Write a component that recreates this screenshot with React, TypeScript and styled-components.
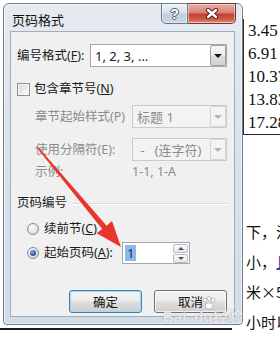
import React from 'react';
import styled, { createGlobalStyle } from 'styled-components';

const GlobalStyle = createGlobalStyle`
    html, body {
        margin: 0;
        padding: 0;
        background: #fff;
    }
    body {
        width: 280px;
        height: 348px;
        overflow: hidden;
    }
    * {
        box-sizing: border-box;
    }
`;

const Page = styled.div`
    position: relative;
    width: 280px;
    height: 348px;
    overflow: hidden;
    background: #fff;
`;

/* ---------- document behind the dialog ---------- */

const Document = styled.div`
    display: grid;
    grid-template-columns: 243px 1fr;
    height: 100%;
    color: #111;
`;

const LeftPane = styled.div`
    display: flex;
    flex-direction: column;
    justify-content: flex-end;
    padding-bottom: 18px;
`;

const Rule = styled.div`
    width: 232px;
    height: 2px;
    background: #1c1c1c;
`;

const RightPane = styled.div`
    display: flex;
    flex-direction: column;
    padding-top: 19px;
    white-space: nowrap;
    overflow: hidden;
`;

const Table = styled.div`
    border-left: 1px solid #2a2a2a;
    border-bottom: 1px solid #2a2a2a;
`;

const Cell = styled.div`
    height: 23px;
    line-height: 23px;
    padding-left: 4px;
    font-family: 'Liberation Serif', 'DejaVu Serif', serif;
    font-size: 17px;
`;

const Lines = styled.div`
    margin-top: 82px;
`;

const Line = styled.div`
    height: 30px;
    line-height: 30px;
    padding-left: 3px;
    font-family: 'Noto Sans CJK SC', sans-serif;
    font-size: 15px;
`;

const Marked = styled.span`
    color: #1d2a8a;
    text-decoration: underline;
    text-decoration-color: #3b5bd6;
`;

/* ---------- dialog window ---------- */

const Window = styled.div`
    position: absolute;
    left: 3px;
    top: 3px;
    width: 240px;
    height: 322px;
    display: flex;
    flex-direction: column;
    padding: 0 7px 7px 6px;
    border: 1px solid #6d7d90;
    border-radius: 6px 6px 4px 4px;
    background: linear-gradient(180deg, #e6ebf1 0%, #dbe3ec 35%, #d2dce7 100%);
    box-shadow: inset 0 0 0 1px rgba(255, 255, 255, 0.6);
    font-family: 'Noto Sans', 'Noto Sans CJK SC', sans-serif;
`;

const TitleBar = styled.div`
    height: 27px;
    display: flex;
    align-items: flex-start;
    justify-content: space-between;
    margin-right: -1px;
`;

const Title = styled.div`
    margin: 7px 0 0 2px;
    font-size: 13px;
    line-height: 18px;
    color: #111;
`;

const Caption = styled.div`
    display: flex;
    margin-top: -1px;
`;

const CaptionButton = styled.div<{ $close?: boolean }>`
    width: ${(p) => (p.$close ? 48 : 27)}px;
    height: 21px;
    display: flex;
    align-items: center;
    justify-content: center;
    border: 1px solid ${(p) => (p.$close ? '#6b3a38' : '#6a7a90')};
    border-left-width: ${(p) => (p.$close ? 0 : 1)}px;
    border-radius: ${(p) => (p.$close ? '0 0 5px 0' : '0 0 0 5px')};
    background: ${(p) =>
        p.$close
            ? 'linear-gradient(180deg, #eab0a7 0%, #dc7f72 45%, #c6402f 55%, #d5604f 85%, #e79a8c 100%)'
            : 'linear-gradient(180deg, #eef2f6 0%, #d8e0ea 45%, #c2cedc 55%, #cbd6e3 100%)'};
    box-shadow: inset 0 0 0 1px rgba(255, 255, 255, 0.45);
`;

const HelpGlyph = styled.span`
    font-family: 'Liberation Sans', sans-serif;
    font-weight: 700;
    font-size: 14px;
    line-height: 14px;
    color: #fff;
    text-shadow: -1px 0 #4c5a6c, 1px 0 #4c5a6c, 0 -1px #4c5a6c, 0 1px #4c5a6c;
`;

const Panel = styled.div`
    flex: 1;
    display: flex;
    flex-direction: column;
    padding: 12px 7px 0 6px;
    border: 1px solid #9fadbd;
    background: #f0f0f0;
    font-size: 12.5px;
    color: #1a1a1a;
`;

const Row = styled.div<{ $top: number; $height: number; $indent?: number }>`
    display: flex;
    align-items: center;
    flex-shrink: 0;
    margin-top: ${(p) => p.$top}px;
    height: ${(p) => p.$height}px;
    padding-left: ${(p) => p.$indent || 0}px;
`;

const Label = styled.span<{ $width?: number; $disabled?: boolean }>`
    width: ${(p) => (p.$width ? `${p.$width}px` : 'auto')};
    flex-shrink: 0;
    line-height: 16px;
    white-space: nowrap;
    color: ${(p) => (p.$disabled ? '#8c8c8c' : '#1a1a1a')};
`;

const Key = styled.span`
    text-decoration: underline;
    text-underline-offset: 1px;
`;

const Combo = styled.div<{ $width: number; $disabled?: boolean }>`
    width: ${(p) => p.$width}px;
    height: 23px;
    display: flex;
    align-items: center;
    padding: 0 0 0 4px;
    border: 1px solid ${(p) => (p.$disabled ? '#c8cacd' : '#a4a7ad')};
    background: ${(p) => (p.$disabled ? '#f3f3f3' : '#fff')};
    color: ${(p) => (p.$disabled ? '#8c8c8c' : '#1a1a1a')};
    font-size: 13px;
    white-space: nowrap;
`;

const ComboText = styled.span`
    flex: 1;
    overflow: hidden;
    line-height: 16px;
`;

const ComboArrow = styled.span<{ $disabled?: boolean }>`
    width: 16px;
    height: 21px;
    display: flex;
    align-items: center;
    justify-content: center;
    border: 1px solid ${(p) => (p.$disabled ? '#d3d5d8' : '#9a9ea6')};
    border-radius: 2px;
    background: ${(p) =>
        p.$disabled ? '#f4f4f4' : 'linear-gradient(180deg, #f7f7f7 0%, #ececec 50%, #dcdcdc 51%, #d2d2d2 100%)'};

    &::after {
        content: '';
        border-left: 4px solid transparent;
        border-right: 4px solid transparent;
        border-top: 4px solid ${(p) => (p.$disabled ? '#b4b4b4' : '#111')};
    }
`;

const CheckBox = styled.span`
    width: 13px;
    height: 13px;
    margin-right: 4px;
    flex-shrink: 0;
    border: 1px solid #8e8f8f;
    background: linear-gradient(135deg, #d6d6d6 0%, #f2f2f2 70%, #fbfbfb 100%);
    box-shadow: inset 0 0 0 1px #f6f6f6;
`;

const Radio = styled.span<{ $checked?: boolean }>`
    position: relative;
    width: 12px;
    height: 12px;
    margin-right: 5px;
    flex-shrink: 0;
    border: 1px solid #8a8c8e;
    border-radius: 50%;
    background: radial-gradient(circle at 40% 35%, #fefefe 0%, #e4e4e4 55%, #c8c8c8 100%);

    &::after {
        content: '';
        display: ${(p) => (p.$checked ? 'block' : 'none')};
        position: absolute;
        left: 2px;
        top: 2px;
        width: 6px;
        height: 6px;
        border-radius: 50%;
        background: radial-gradient(circle at 40% 35%, #8bb8e6 0%, #2d5f9c 55%, #163a66 100%);
    }
`;

const GroupLine = styled.span`
    flex: 1;
    height: 1px;
    margin-left: 6px;
    background: #d5dfe5;
    box-shadow: 0 1px 0 #fff;
`;

const SpinBox = styled.div`
    width: 68px;
    height: 22px;
    display: flex;
    align-items: center;
    padding: 0 1px 0 2px;
    border: 1px solid #a4a7ad;
    background: #fff;
`;

const Selected = styled.span`
    padding: 0 2px;
    line-height: 16px;
    font-size: 13px;
    background: #8cb6e8;
    color: #10305c;
`;

const SpinButtons = styled.div`
    display: flex;
    flex-direction: column;
    gap: 1px;
    margin-left: auto;
`;

const SpinButton = styled.span<{ $up?: boolean }>`
    width: 15px;
    height: 9px;
    display: flex;
    align-items: center;
    justify-content: center;
    border: 1px solid #b7bcc3;
    border-radius: 2px;
    background: linear-gradient(180deg, #fafafa 0%, #e6e8eb 100%);

    &::after {
        content: '';
        border-left: 3px solid transparent;
        border-right: 3px solid transparent;
        ${(p) => (p.$up ? 'border-bottom: 3px solid #4a5668;' : 'border-top: 3px solid #4a5668;')}
    }
`;

const ButtonRow = styled.div`
    display: flex;
    justify-content: flex-end;
    gap: 12px;
    margin-top: 26px;
`;

const PushButton = styled.div<{ $default?: boolean }>`
    width: 73px;
    height: 23px;
    display: flex;
    align-items: center;
    justify-content: center;
    border: 1px solid ${(p) => (p.$default ? '#3c7fb1' : '#707070')};
    border-radius: 3px;
    background: linear-gradient(180deg, #f4f4f4 0%, #ebebeb 48%, #dddddd 52%, #cfcfcf 100%);
    box-shadow: inset 0 0 0 1px ${(p) => (p.$default ? '#a6d8f3' : 'rgba(255, 255, 255, 0.75)')};
    font-size: 12.5px;
    color: #111;
`;

/* ---------- overlays ---------- */

const Overlay = styled.svg`
    position: absolute;
    left: 0;
    top: 0;
    pointer-events: none;
`;

const Watermark = styled.div`
    position: absolute;
    left: 163px;
    top: 309px;
    display: flex;
    align-items: baseline;
    font-family: 'Liberation Sans', 'Noto Sans CJK SC', sans-serif;
    font-weight: 700;
    font-size: 15px;
    line-height: 15px;
    color: rgba(255, 255, 255, 0.8);
    text-shadow: 0 0 1px rgba(90, 90, 90, 0.55);
    pointer-events: none;
`;

const Paw = styled.svg`
    position: absolute;
    left: 38px;
    top: -13px;
`;

const WatermarkGap = styled.span`
    width: 8px;
`;

const App = () => {
    return (
        <Page>
            <GlobalStyle />
            <Document>
                <LeftPane>
                    <Rule />
                </LeftPane>
                <RightPane>
                    <Table>
                        {['3.45', '6.91', '10.37', '13.83', '17.28'].map((v) => (
                            <Cell key={v}>{v}</Cell>
                        ))}
                    </Table>
                    <Lines>
                        <Line>下，注</Line>
                        <Line>
                            小，<Marked>且</Marked>
                        </Line>
                        <Line>米×5</Line>
                        <Line>小时以</Line>
                    </Lines>
                </RightPane>
            </Document>

            <Window>
                <TitleBar>
                    <Title>页码格式</Title>
                    <Caption>
                        <CaptionButton>
                            <HelpGlyph>?</HelpGlyph>
                        </CaptionButton>
                        <CaptionButton $close>
                            <svg width="14" height="11" viewBox="0 0 14 11">
                                <path d="M3 2 L11 9 M11 2 L3 9" stroke="#5b2420" strokeWidth="4.4" strokeLinecap="round" />
                                <path d="M3 2 L11 9 M11 2 L3 9" stroke="#fff" strokeWidth="2.4" strokeLinecap="round" />
                            </svg>
                        </CaptionButton>
                    </Caption>
                </TitleBar>

                <Panel>
                    <Row $top={0} $height={23}>
                        <Label $width={73}>
                            编号格式(<Key>F</Key>):
                        </Label>
                        <Combo $width={138}>
                            <ComboText>1, 2, 3, ...</ComboText>
                            <ComboArrow />
                        </Combo>
                    </Row>

                    <Row $top={14} $height={16}>
                        <CheckBox />
                        <Label>
                            包含章节号(<Key>N</Key>)
                        </Label>
                    </Row>

                    <Row $top={8} $height={23} $indent={18}>
                        <Label $width={97} $disabled>
                            章节起始样式(P)
                        </Label>
                        <Combo $width={96} $disabled>
                            <ComboText>标题 1</ComboText>
                            <ComboArrow $disabled />
                        </Combo>
                    </Row>

                    <Row $top={10} $height={23} $indent={18}>
                        <Label $width={97} $disabled>
                            使用分隔符(E):
                        </Label>
                        <Combo $width={96} $disabled>
                            <ComboText>&nbsp;-&nbsp;&nbsp;&nbsp;(连字符)</ComboText>
                            <ComboArrow $disabled />
                        </Combo>
                    </Row>

                    <Row $top={3} $height={16} $indent={18}>
                        <Label $width={97} $disabled>
                            示例:
                        </Label>
                        <Label $disabled>1-1, 1-A</Label>
                    </Row>

                    <Row $top={15} $height={16}>
                        <Label>页码编号</Label>
                        <GroupLine />
                    </Row>

                    <Row $top={10} $height={16} $indent={10}>
                        <Radio />
                        <Label>
                            续前节(<Key>C</Key>)
                        </Label>
                    </Row>

                    <Row $top={5} $height={22} $indent={10}>
                        <Radio $checked />
                        <Label $width={78}>
                            起始页码(<Key>A</Key>):
                        </Label>
                        <SpinBox>
                            <Selected>1</Selected>
                            <SpinButtons>
                                <SpinButton $up />
                                <SpinButton />
                            </SpinButtons>
                        </SpinBox>
                    </Row>

                    <ButtonRow>
                        <PushButton $default>确定</PushButton>
                        <PushButton>取消</PushButton>
                    </ButtonRow>
                </Panel>
            </Window>

            <Overlay width="280" height="348" viewBox="0 0 280 348">
                <polygon
                    points="38.6,147.5 106.6,225.8 112,221 121,247 96.6,233.2 102.2,228.9 37.4,148.5"
                    fill="#e8362c"
                />
            </Overlay>

            <Watermark>
                <span>Bai</span>
                <WatermarkGap />
                <span>du</span>
                <span>经验</span>
                <Paw width="16" height="14" viewBox="0 0 16 14">
                    <g fill="rgba(255,255,255,0.85)" stroke="rgba(110,110,110,0.5)" strokeWidth="0.8">
                        <circle cx="4" cy="4" r="2" />
                        <circle cx="8" cy="2.5" r="2" />
                        <circle cx="12" cy="4" r="2" />
                        <ellipse cx="8" cy="10" rx="4" ry="3.2" />
                    </g>
                </Paw>
            </Watermark>
        </Page>
    );
};

export default App;
